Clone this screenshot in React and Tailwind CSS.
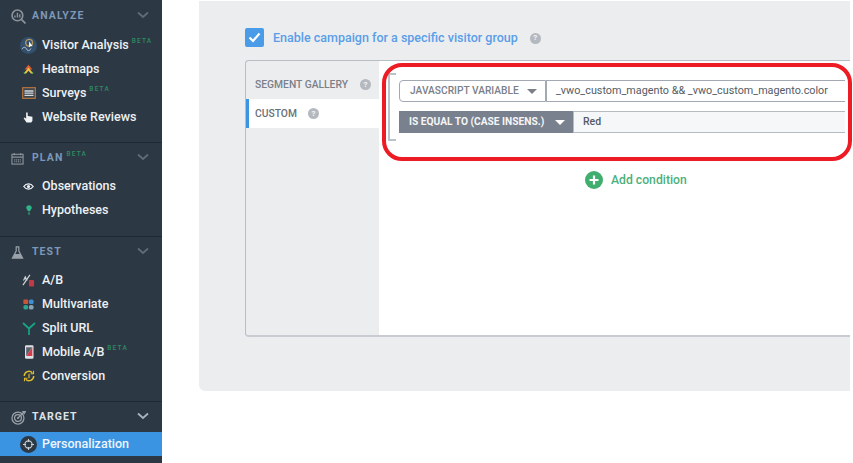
// App.jsx
import React from 'react';

const Svg = ({ children, size = 14 }) => (
  <svg width={size} height={size} viewBox="0 0 14 14" fill="none" className="flex-shrink-0">
    {children}
  </svg>
);

const AnalyzeIcon = () => (
  <Svg size={15}>
    <circle cx="6" cy="6" r="5" stroke="#8b949c" strokeWidth="1.5" />
    <path d="M9.500 9.500 13.500 13.500" stroke="#8b949c" strokeWidth="1.600" />
    <path d="M3.700 8V6M6 8V3.500M8.200 8V5" stroke="#8b949c" strokeWidth="1.300" />
  </Svg>
);

const CalendarIcon = () => (
  <Svg size={13}>
    <rect x="1" y="2.500" width="12" height="10.500" stroke="#8b949c" strokeWidth="1.200" />
    <path d="M1 5.500h12M3.500 1v2.500M10.500 1v2.500" stroke="#8b949c" strokeWidth="1.200" />
    <path d="M3.500 8.500h7M3.500 10.500h7" stroke="#8b949c" strokeWidth="1.200" strokeDasharray="1.200 .8" />
  </Svg>
);

const FlaskIcon = () => (
  <Svg size={13}>
    <path d="M5 1h4M5.600 1v4.500L1.500 13h11L8.400 5.500V1" stroke="#9aa1a8" strokeWidth="1.300" />
    <path d="M4 8.500h6l2.500 4.500h-11z" fill="#9aa1a8" />
  </Svg>
);

const TargetIcon = () => (
  <Svg size={15}>
    <circle cx="6.500" cy="7.500" r="5.600" stroke="#9aa1a8" strokeWidth="1.200" />
    <circle cx="6.500" cy="7.500" r="3.200" stroke="#9aa1a8" strokeWidth="1.200" />
    <circle cx="6.500" cy="7.500" r="1" fill="#9aa1a8" />
    <path d="M6.500 7.500 12 2M10.500 1.500h3l-1.500 2.500" stroke="#9aa1a8" strokeWidth="1.100" />
  </Svg>
);

const VisitorIcon = () => (
  <Svg size={17}>
    <circle cx="7" cy="7" r="7" fill="#34506f" />
    <circle cx="7.500" cy="4.800" r="2.800" stroke="#b39a5c" strokeWidth="1.100" />
    <path d="M1.500 10c1.500-2 3-2 4 0s2.500 1.500 3.500-.5" stroke="#c3ccd6" strokeWidth=".8" />
    <path d="M7.500 3.500v5l1.200-1.100 1.600.2z" fill="#fff" />
  </Svg>
);

const HeatmapIcon = () => (
  <Svg size={11}>
    <path d="M7 1 12 7H2z" fill="#e25a3a" />
    <path d="M7 4.500 13 12H10L7 8.500 4 12H1z" fill="#e9c23e" />
    <path d="M1 9.500 3.500 12H1zM13 9.500 10.500 12H13z" fill="#58b35a" />
  </Svg>
);

const SurveyIcon = () => (
  <Svg>
    <rect x=".7" y="1.700" width="12.600" height="10.600" fill="#3a4652" stroke="#c47a3c" strokeWidth="1.100" />
    <path d="M2.500 5h9M2.500 7.200h9M2.500 9.400h9" stroke="#d5d8db" strokeWidth="1.300" />
  </Svg>
);

const HandIcon = () => (
  <Svg size={11}>
    <path d="M4 .5h2v4.500l6 1.200V11l-1.500 2.500H4.500L.8 8l1.400-1L4 8.500z" fill="#f1f4f7" />
  </Svg>
);

const EyeIcon = () => (
  <Svg size={11}>
    <path d="M1 7c3-4.400 9-4.400 12 0-3 4.400-9 4.400-12 0z" stroke="#f1f4f7" strokeWidth="1.600" />
    <circle cx="7" cy="7" r="2" fill="#f1f4f7" />
  </Svg>
);

const BulbIcon = () => (
  <Svg size={12}>
    <path d="M7 1.500c2 0 3.200 1.300 3.200 2.800 0 1.600-1.600 2.600-2.200 4.200H6C5.400 6.900 3.800 5.900 3.800 4.300 3.800 2.800 5 1.500 7 1.500z" fill="#2fb489" />
    <path d="M6.300 9.500h1.400v3H6.300z" fill="#2fb489" />
  </Svg>
);

const AbIcon = () => (
  <Svg size={13}>
    <path d="M1 12 8.500 1" stroke="#cfd3d7" strokeWidth="1.300" />
    <path d="M3.500 1.500 1 7h1.300l.3-1h1.900l.3 1h1.300z" fill="#cfd3d7" />
    <rect x="7.500" y="6.500" width="5.500" height="7" rx="1" fill="#c23a48" />
  </Svg>
);

const DotsIcon = () => (
  <Svg size={11}>
    <rect x=".5" y=".5" width="6" height="6" rx="1" fill="#c8553a" />
    <rect x="7.500" y=".5" width="6" height="6" rx="2" fill="#3e8fd0" />
    <rect x=".5" y="7.500" width="6" height="6" rx="2.500" fill="#2fa58f" />
    <rect x="7.500" y="7.500" width="6" height="6" rx="2.500" fill="#8aa3b5" />
  </Svg>
);

const SplitIcon = () => (
  <Svg size={14}>
    <path d="M1 2 7 7.500 13 2M7 7.500V14" stroke="#17a585" strokeWidth="1.700" />
  </Svg>
);

const MobileIcon = () => (
  <Svg>
    <rect x="3" y=".3" width="8.500" height="13.400" rx="1.200" fill="#dfe2e5" />
    <path d="M4.200 11V2.200h6.100z" fill="#5a626b" />
    <path d="M10.300 2.200V11H4.200z" fill="#d23c4c" />
  </Svg>
);

const ConversionIcon = () => (
  <Svg size={12}>
    <path d="M1.500 7a5.500 5.500 0 0 1 9.400-3.900M12.500 7a5.500 5.500 0 0 1-9.400 3.900" stroke="#e0bd2c" strokeWidth="1.700" />
    <path d="M12.300 1v3.500H8.800M1.700 13V9.500h3.500" stroke="#e0bd2c" strokeWidth="1.200" />
    <path d="M7 4.500v5" stroke="#e0bd2c" strokeWidth="1.400" />
  </Svg>
);

const PersonalizeIcon = () => (
  <svg width="17" height="17" viewBox="0 0 17 17" fill="none" className="flex-shrink-0">
    <circle cx="8.500" cy="8.500" r="8.500" fill="#2c3844" />
    <circle cx="8.500" cy="8.500" r="3.600" stroke="#c9d2da" strokeWidth="1.100" />
    <path d="M8.500 3v3M8.500 11v3M3 8.500h3M11 8.500h3" stroke="#c9d2da" strokeWidth="1" />
  </svg>
);

const Chevron = ({ color = '#5f6c78' }) => (
  <svg width="12" height="8" viewBox="0 0 12 8" fill="none">
    <path d="M1 1.500 6 6l5-4.500" stroke={color} strokeWidth="1.800" />
  </svg>
);

const Help = () => (
  <span className="flex h-[11px] w-[11px] items-center justify-center rounded-full bg-[#b4b9bf] text-[8px] font-bold leading-none text-[#f4f5f6]">
    ?
  </span>
);

const Beta = () => (
  <span className="ml-[3px] -mt-[7px] text-[6.500px] font-medium tracking-[1.200px] text-[#2e8b62]">BETA</span>
);

const sections = [
  {
    title: 'ANALYZE',
    icon: <AnalyzeIcon />,
    box: 'pt-px pb-[13px]',
    list: 'mt-[2px]',
    items: [
      { label: 'Visitor Analysis', icon: <VisitorIcon />, beta: true },
      { label: 'Heatmaps', icon: <HeatmapIcon /> },
      { label: 'Surveys', icon: <SurveyIcon />, beta: true },
      { label: 'Website Reviews', icon: <HandIcon /> },
    ],
  },
  {
    title: 'PLAN',
    icon: <CalendarIcon />,
    beta: true,
    box: 'pb-[14px]',
    list: 'mt-px',
    items: [
      { label: 'Observations', icon: <EyeIcon /> },
      { label: 'Hypotheses', icon: <BulbIcon /> },
    ],
  },
  {
    title: 'TEST',
    icon: <FlaskIcon />,
    box: 'pb-[13px]',
    list: 'mt-px',
    items: [
      { label: 'A/B', icon: <AbIcon /> },
      { label: 'Multivariate', icon: <DotsIcon /> },
      { label: 'Split URL', icon: <SplitIcon /> },
      { label: 'Mobile A/B', icon: <MobileIcon />, beta: true },
      { label: 'Conversion', icon: <ConversionIcon /> },
    ],
  },
];

const Section = ({ section }) => (
  <div className={`border-b border-[#1f2a35] ${section.box}`}>
    <div className="flex h-[30px] items-center pl-[11px] pr-[13px]">
      <span className="flex w-[21px] items-center">{section.icon}</span>
      <span className="text-[10.500px] font-bold tracking-[1.100px] text-[#7d97b8]">{section.title}</span>
      {section.beta && <Beta />}
      <span className="ml-auto -mt-[3px] flex">
        <Chevron />
      </span>
    </div>
    <div className={section.list}>
      {section.items.map((item) => (
        <div key={item.label} className="flex h-[24px] items-center">
          <span className="flex w-[42px] flex-shrink-0 justify-end pr-[5px]">
            <span className="flex w-[17px] justify-center">{item.icon}</span>
          </span>
          <span className="text-[12.500px] font-medium text-[#eef1f4]">{item.label}</span>
          {item.beta && <Beta />}
        </div>
      ))}
    </div>
  </div>
);

const Sidebar = () => (
  <div className="h-full w-[162px] flex-shrink-0 bg-[#2c3844]">
    {sections.map((section) => (
      <Section key={section.title} section={section} />
    ))}
    <div className="flex h-[30px] items-center pl-[11px] pr-[13px]">
      <span className="flex w-[21px] items-center">
        <TargetIcon />
      </span>
      <span className="text-[10.500px] font-bold tracking-[1px] text-[#dfe3e7]">TARGET</span>
      <span className="ml-auto -mt-[3px] flex">
        <Chevron color="#aab2ba" />
      </span>
    </div>
    <div className="flex h-[24px] items-center bg-[#3a94e2]">
      <span className="flex w-[42px] flex-shrink-0 justify-end pr-[5px]">
        <PersonalizeIcon />
      </span>
      <span className="text-[12.500px] font-medium text-[#eef5fc]">Personalization</span>
    </div>
  </div>
);

const ConditionBuilder = () => (
  <div className="flex flex-col pl-[9px] pt-[12px]">
    <div className="flex">
      <div className="h-[68px] w-[8px] flex-shrink-0 border-y-2 border-l-2 border-[#bcc2cb]" />
      <div className="ml-[3px] flex w-[446px] flex-col gap-[9px] pt-[7px]">
        <div className="flex h-[22px]">
          <div className="flex w-[147px] items-center justify-between rounded-l-sm border border-[#a3a9b2] pl-[10px] pr-[8px] text-[10.200px] font-medium text-[#7b8088]">
            <span>JAVASCRIPT VARIABLE</span>
            <span className="h-0 w-0 border-x-[5px] border-t-[5px] border-x-transparent border-t-[#7b8088]" />
          </div>
          <div className="flex flex-1 items-center border-y border-l border-[#a3a9b2] pl-[9px] text-[10.800px] text-[#555b63]">
            _vwo_custom_magento &amp;&amp; _vwo_custom_magento.color
          </div>
        </div>
        <div className="flex h-[22px]">
          <div className="flex w-[174px] items-center justify-between bg-[#7a818e] pl-[10px] pr-[8px] text-[10.200px] font-bold text-[#f4f5f6]">
            <span>IS EQUAL TO (CASE INSENS.)</span>
            <span className="h-0 w-0 border-x-[5px] border-t-[5px] border-x-transparent border-t-white" />
          </div>
          <div className="flex flex-1 items-center border-y border-l border-[#b6bbc2] bg-[#f6f7f8] pl-[9px] text-[10.500px] font-medium text-[#555b63]">
            Red
          </div>
        </div>
      </div>
    </div>
    <div className="ml-[197px] mt-[30px] flex items-center gap-[8px]">
      <span className="flex h-[18px] w-[18px] items-center justify-center rounded-full bg-[#3fae6f]">
        <svg width="12" height="12" viewBox="0 0 12 12" fill="none">
          <path d="M6 1.500v9M1.500 6h9" stroke="#fff" strokeWidth="2.200" />
        </svg>
      </span>
      <span className="text-[12.200px] font-medium text-[#4cb07c]">Add condition</span>
    </div>
  </div>
);

export default function App() {
  return (
    <div className="relative flex h-screen w-screen overflow-hidden bg-white font-['Roboto',sans-serif]">
      <Sidebar />
      <div className="flex-1 pl-[37px] pr-[3px] pt-px">
        <div className="h-[390px] overflow-hidden rounded-bl-md bg-[#ecedef] pl-[46px] pt-[27px]">
          <div className="flex h-[20px] items-center">
            <span className="-mt-px flex h-[19px] w-[19px] items-center justify-center rounded-[2px] bg-[#4a9be8]">
              <svg width="13" height="11" viewBox="0 0 13 11" fill="none">
                <path d="M1.500 5.500 5 9l6.500-7.500" stroke="#fff" strokeWidth="2.200" />
              </svg>
            </span>
            <span className="ml-[9px] text-[12.500px] font-medium text-[#5a9ee8]">
              Enable campaign for a specific visitor group
            </span>
            <span className="ml-[12px]">
              <Help />
            </span>
          </div>
          <div className="mt-[12px] flex h-[277px] rounded-l-sm border-y border-l border-[#b9bdc4] border-b-2 border-b-[#c8ccd2]">
            <div className="w-[133px] flex-shrink-0 pt-[9px] text-[10.300px] font-medium">
              <div className="flex h-[29px] items-center justify-between pl-[9px] pr-[8px] text-[#7a8089]">
                <span>SEGMENT GALLERY</span>
                <Help />
              </div>
              <div className="flex h-[29px] items-center gap-[11px] border-l-[3px] border-[#3a94e2] bg-white pl-[6px] text-[#6a7079]">
                <span>CUSTOM</span>
                <Help />
              </div>
            </div>
            <div className="flex-1 bg-white">
              <ConditionBuilder />
            </div>
          </div>
        </div>
      </div>
      <div className="absolute left-[382px] top-[63px] h-[98px] w-[470px] rounded-[20px] border-[4px] border-[#ed1c24]" />
    </div>
  );
}
